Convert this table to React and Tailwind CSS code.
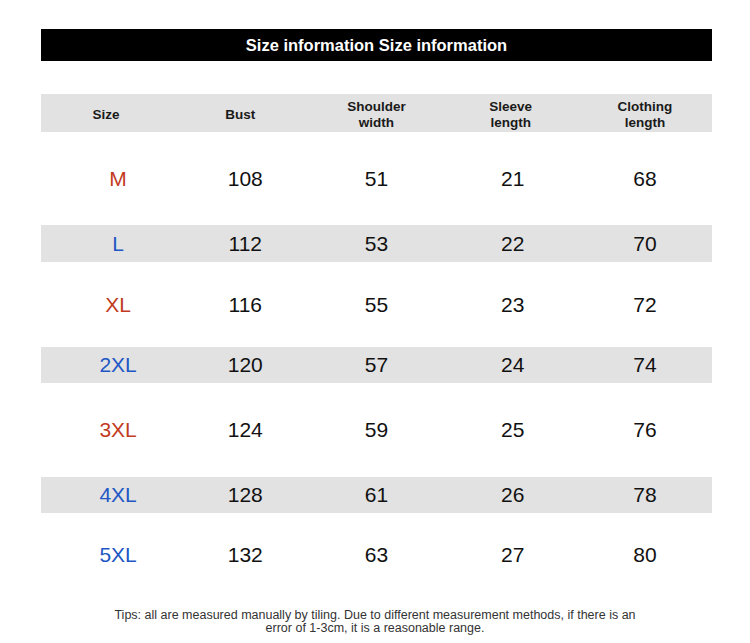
const rows = [
  { size: "M", color: "text-[#c23b1f]", vals: ["108", "51", "21", "68"], gray: false, h: "h-[93px]" },
  { size: "L", color: "text-[#2157c4]", vals: ["112", "53", "22", "70"], gray: true, h: "h-[37px]" },
  { size: "XL", color: "text-[#c23b1f]", vals: ["116", "55", "23", "72"], gray: false, h: "h-[85px]" },
  { size: "2XL", color: "text-[#2157c4]", vals: ["120", "57", "24", "74"], gray: true, h: "h-[36px]" },
  { size: "3XL", color: "text-[#c23b1f]", vals: ["124", "59", "25", "76"], gray: false, h: "h-[94px]" },
  { size: "4XL", color: "text-[#2157c4]", vals: ["128", "61", "26", "78"], gray: true, h: "h-[36px]" },
  { size: "5XL", color: "text-[#2157c4]", vals: ["132", "63", "27", "80"], gray: false, h: "h-[84px]" },
];

const heads = ["Size", "Bust", "Shoulder\nwidth", "Sleeve\nlength", "Clothing\nlength"];

export default function App() {
  return (
    <div className="w-[750px] h-[643px] bg-white overflow-hidden font-['Liberation_Sans',Arial,sans-serif]">
      <div className="ml-[41px] w-[671px] mt-[29px] h-[32px] bg-black flex items-center justify-center">
        <span className="text-white font-bold text-[16.5px]">Size information Size information</span>
      </div>

      <div className="ml-[41px] w-[671px] mt-[33px]">
        <div className="h-[38px] bg-[#e2e2e2] grid grid-cols-5 items-center pt-[3px]">
          {heads.map((h, i) => (
            <div
              key={i}
              className={`text-center whitespace-pre-line text-[13.5px] leading-[16px] font-semibold text-[#1a1a1a] ${i === 0 ? "pr-[4px]" : ""} ${i === 1 ? "pr-[4px]" : ""}`}
            >
              {h}
            </div>
          ))}
        </div>

        {rows.map((r) => (
          <div key={r.size} className={`${r.h} ${r.gray ? "bg-[#e2e2e2]" : ""} grid grid-cols-5 items-center text-[21px]`}>
            <div className={`text-center pl-[20px] ${r.color}`}>{r.size}</div>
            {r.vals.map((v, i) => (
              <div key={i} className={`text-center text-[#111] ${i === 0 ? "pl-[6px]" : ""} ${i === 2 ? "pl-[4px]" : ""}`}>{v}</div>
            ))}
          </div>
        ))}
      </div>

      <p className="mt-[12px] text-center text-[12.5px] leading-[13px] font-medium text-[#333]">
        Tips: all are measured manually by tiling. Due to different measurement methods, if there is an
        <br />
        error of 1-3cm, it is a reasonable range.
      </p>
    </div>
  );
}
